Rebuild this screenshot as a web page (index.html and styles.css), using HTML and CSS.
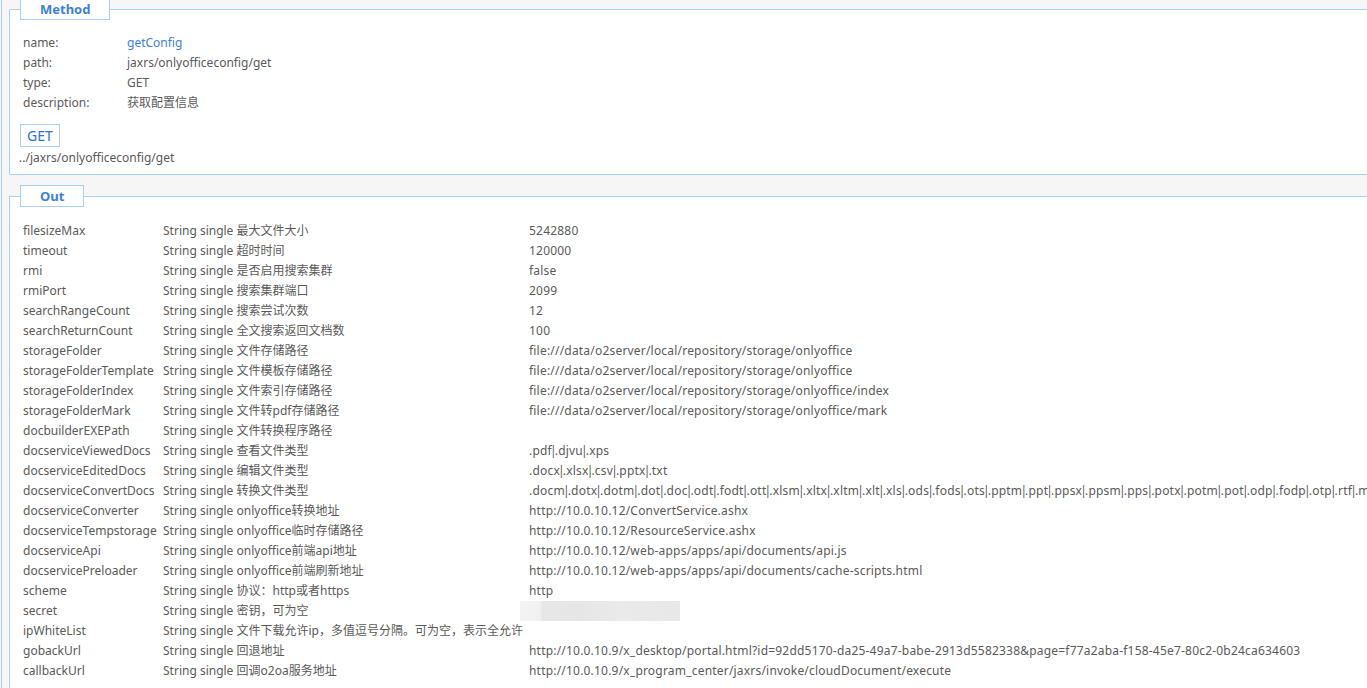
FILE: index.html
```html
<!DOCTYPE html>
<html lang="zh">
<head>
<meta charset="utf-8">
<title>getConfig</title>
<link rel="stylesheet" href="styles.css">
</head>
<body>
<div class="page">
  <fieldset class="panel panel-method">
    <legend class="tab">Method</legend>
    <div class="kv"><span class="k">name:</span><span class="v link">getConfig</span></div>
    <div class="kv"><span class="k">path:</span><span class="v">jaxrs/onlyofficeconfig/get</span></div>
    <div class="kv"><span class="k">type:</span><span class="v">GET</span></div>
    <div class="kv"><span class="k">description:</span><span class="v">获取配置信息</span></div>
    <div class="btn-row"><span class="btn">GET</span></div>
    <div class="url">../jaxrs/onlyofficeconfig/get</div>
  </fieldset>

  <fieldset class="panel panel-out">
    <legend class="tab">Out</legend>
    <div class="rows">
      <div class="row"><span class="c1">filesizeMax</span><span class="c2">String single 最大文件大小</span><span class="c3">5242880</span></div>
      <div class="row"><span class="c1">timeout</span><span class="c2">String single 超时时间</span><span class="c3">120000</span></div>
      <div class="row"><span class="c1">rmi</span><span class="c2">String single 是否启用搜索集群</span><span class="c3">false</span></div>
      <div class="row"><span class="c1">rmiPort</span><span class="c2">String single 搜索集群端口</span><span class="c3">2099</span></div>
      <div class="row"><span class="c1">searchRangeCount</span><span class="c2">String single 搜索尝试次数</span><span class="c3">12</span></div>
      <div class="row"><span class="c1">searchReturnCount</span><span class="c2">String single 全文搜索返回文档数</span><span class="c3">100</span></div>
      <div class="row"><span class="c1">storageFolder</span><span class="c2">String single 文件存储路径</span><span class="c3">file:///data/o2server/local/repository/storage/onlyoffice</span></div>
      <div class="row"><span class="c1">storageFolderTemplate</span><span class="c2">String single 文件模板存储路径</span><span class="c3">file:///data/o2server/local/repository/storage/onlyoffice</span></div>
      <div class="row"><span class="c1">storageFolderIndex</span><span class="c2">String single 文件索引存储路径</span><span class="c3">file:///data/o2server/local/repository/storage/onlyoffice/index</span></div>
      <div class="row"><span class="c1">storageFolderMark</span><span class="c2">String single 文件转pdf存储路径</span><span class="c3">file:///data/o2server/local/repository/storage/onlyoffice/mark</span></div>
      <div class="row"><span class="c1">docbuilderEXEPath</span><span class="c2">String single 文件转换程序路径</span><span class="c3"></span></div>
      <div class="row"><span class="c1">docserviceViewedDocs</span><span class="c2">String single 查看文件类型</span><span class="c3">.pdf<span class="sep">|</span>.djvu<span class="sep">|</span>.xps</span></div>
      <div class="row"><span class="c1">docserviceEditedDocs</span><span class="c2">String single 编辑文件类型</span><span class="c3">.docx<span class="sep">|</span>.xlsx<span class="sep">|</span>.csv<span class="sep">|</span>.pptx<span class="sep">|</span>.txt</span></div>
      <div class="row"><span class="c1">docserviceConvertDocs</span><span class="c2">String single 转换文件类型</span><span class="c3">.docm<span class="sep">|</span>.dotx<span class="sep">|</span>.dotm<span class="sep">|</span>.dot<span class="sep">|</span>.doc<span class="sep">|</span>.odt<span class="sep">|</span>.fodt<span class="sep">|</span>.ott<span class="sep">|</span>.xlsm<span class="sep">|</span>.xltx<span class="sep">|</span>.xltm<span class="sep">|</span>.xlt<span class="sep">|</span>.xls<span class="sep">|</span>.ods<span class="sep">|</span>.fods<span class="sep">|</span>.ots<span class="sep">|</span>.pptm<span class="sep">|</span>.ppt<span class="sep">|</span>.ppsx<span class="sep">|</span>.ppsm<span class="sep">|</span>.pps<span class="sep">|</span>.potx<span class="sep">|</span>.potm<span class="sep">|</span>.pot<span class="sep">|</span>.odp<span class="sep">|</span>.fodp<span class="sep">|</span>.otp<span class="sep">|</span>.rtf<span class="sep">|</span>.mht<span class="sep">|</span>.html<span class="sep">|</span>.htm<span class="sep">|</span>.epub</span></div>
      <div class="row"><span class="c1">docserviceConverter</span><span class="c2">String single onlyoffice转换地址</span><span class="c3">http://10.0.10.12/ConvertService.ashx</span></div>
      <div class="row"><span class="c1">docserviceTempstorage</span><span class="c2">String single onlyoffice临时存储路径</span><span class="c3">http://10.0.10.12/ResourceService.ashx</span></div>
      <div class="row"><span class="c1">docserviceApi</span><span class="c2">String single onlyoffice前端api地址</span><span class="c3">http://10.0.10.12/web-apps/apps/api/documents/api.js</span></div>
      <div class="row"><span class="c1">docservicePreloader</span><span class="c2">String single onlyoffice前端刷新地址</span><span class="c3">http://10.0.10.12/web-apps/apps/api/documents/cache-scripts.html</span></div>
      <div class="row"><span class="c1">scheme</span><span class="c2">String single 协议：http或者https</span><span class="c3">http</span></div>
      <div class="row"><span class="c1">secret</span><span class="c2">String single 密钥，可为空</span><span class="c3"><span class="blurred"></span></span></div>
      <div class="row"><span class="c1">ipWhiteList</span><span class="c2 wide">String single 文件下载允许ip，多值逗号分隔。可为空，表示全允许</span><span class="c3"></span></div>
      <div class="row"><span class="c1">gobackUrl</span><span class="c2">String single 回退地址</span><span class="c3">http://10.0.10.9/x_desktop/portal.html?id=92dd5170-da25-49a7-babe-2913d5582338&amp;page=f77a2aba-f158-45e7-80c2-0b24ca634603</span></div>
      <div class="row"><span class="c1">callbackUrl</span><span class="c2">String single 回调o2oa服务地址</span><span class="c3">http://10.0.10.9/x_program_center/jaxrs/invoke/cloudDocument/execute</span></div>
    </div>
  </fieldset>
</div>
</body>
</html>
```

FILE: styles.css
```css
html, body {
  margin: 0;
  padding: 0;
  background: #f6f6f6;
  overflow: hidden;
}

body {
  font-family: "Noto Sans", "Noto Sans CJK SC", sans-serif;
  font-size: 12px;
  color: #5a5a5a;
}

.page {
  width: 1700px;
  margin-left: 1px;
  border-left: 1px solid #a9d0f2;
  padding-left: 7px;
  min-height: 700px;
}

.panel {
  margin: 0;
  border: 1px solid #a9d0f2;
  background: #fff;
  padding: 0 0 0 10px;
  min-width: 0;
}

.panel-method {
  margin-top: -2px;
  padding-bottom: 6px;
}

.panel-out {
  margin-top: 10px;
  min-height: 600px;
}

.tab {
  padding: 0 19px;
  border: 1px solid #a9d0f2;
  background: #fff;
  color: #3d7fd8;
  font-weight: bold;
  font-size: 13px;
  line-height: 20px;
  height: 20px;
  margin: 0;
}

.kv {
  display: flex;
  height: 20px;
  line-height: 20px;
  padding-left: 3px;
  white-space: nowrap;
}

.kv:first-of-type {
  margin-top: 13px;
}

.k {
  width: 104px;
}

.link {
  color: #3d7fd8;
}

.btn-row {
  margin-top: 11px;
  height: 24px;
}

.btn {
  display: inline-block;
  box-sizing: border-box;
  height: 23px;
  line-height: 21px;
  padding: 0 6px;
  border: 1px solid #a9d0f2;
  color: #2d73d2;
  font-size: 14px;
}

.url {
  line-height: 20px;
  height: 20px;
  margin-left: -1px;
}

.rows {
  padding-top: 14px;
}

.row {
  display: flex;
  height: 20px;
  line-height: 20px;
  padding-left: 3px;
  white-space: nowrap;
}

.c1 {
  width: 140px;
  flex: none;
}

.c2 {
  width: 366px;
  flex: none;
}

.c3 {
  flex: none;
  letter-spacing: 0.2px;
}

.sep {
  margin: 0 -1.9px;
  letter-spacing: 0;
}

.blurred {
  display: block;
  margin-left: -9px;
  width: 160px;
  height: 20px;
  background: linear-gradient(90deg, #f3f3f3 0, #f1f1f1 20px, #e7e7e7 22px, #e6e6e6 60px, #eaeaea 100px, #e8e8e8 160px);
}
```
